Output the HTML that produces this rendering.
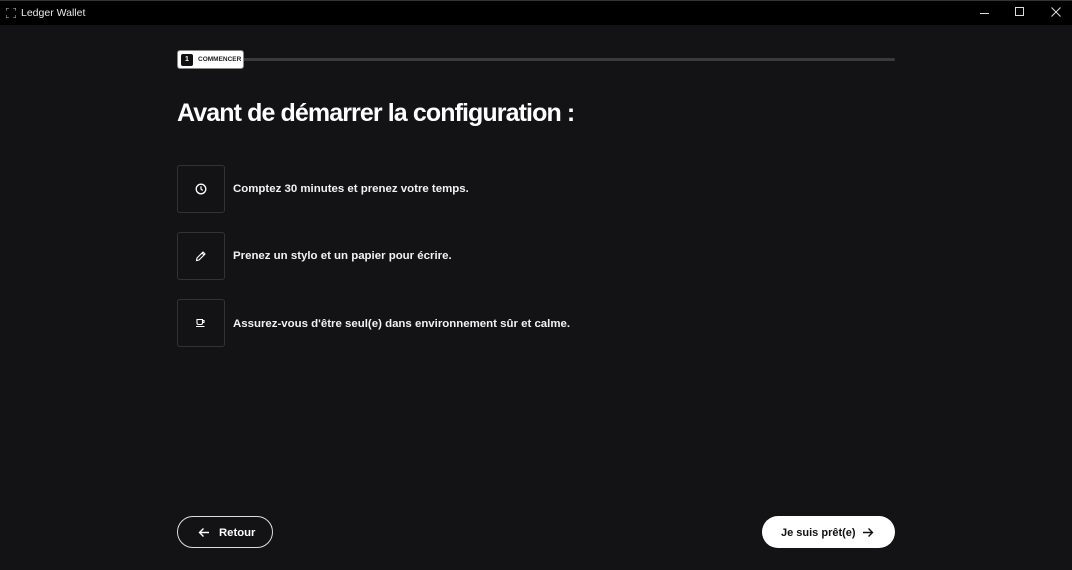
<!DOCTYPE html>
<html><head><meta charset="utf-8"><style>
*{margin:0;padding:0;box-sizing:border-box}
body{width:1072px;height:570px;background:#131315;font-family:"Liberation Sans",sans-serif;color:#fff;position:relative;overflow:hidden}
.tb{position:absolute;left:0;top:0;width:1072px;height:25px;background:#000;border-top:1px solid #333}
.tb .t{position:absolute;left:21px;top:6px;font-size:10.5px;color:#e8e8e8}
.ab{position:absolute}
.box{position:absolute;left:177px;width:48px;height:48px;border:1px solid #333;border-radius:3px}
.txt{position:absolute;left:233px;font-size:11.45px;font-weight:bold;color:#f2f2f2}
</style></head><body>
<div class="tb">
<svg class="ab" style="left:6px;top:7px" width="10" height="10"><path d="M0 3V0h3M7 0h3v3M10 7v3H7M3 10H0V7" stroke="#bbb" fill="none" stroke-width="1"/></svg>
<div class="t">Ledger Wallet</div>
<svg class="ab" style="left:980px;top:7px" width="10" height="10"><path d="M0 5.5h9" stroke="#ddd"/></svg>
<svg class="ab" style="left:1015px;top:6px" width="11" height="11"><rect x="0.5" y="0.5" width="8" height="8" stroke="#ddd" fill="none"/></svg>
<svg class="ab" style="left:1051px;top:6px" width="11" height="11"><path d="M0.5 0.5l9 9M9.5 0.5l-9 9" stroke="#ddd"/></svg>
</div>
<div class="ab" style="left:243px;top:58px;width:652px;height:3px;background:#3a3a3c;border-radius:2px"></div>
<div class="ab" style="left:177px;top:50px;width:67px;height:19px;background:#fff;border-radius:3px;border:1px solid #888"></div>
<div class="ab" style="left:181px;top:54px;width:12px;height:12px;background:#111;border-radius:2px;color:#fff;font-size:7px;font-weight:bold;text-align:center;line-height:12px">1</div>
<div class="ab" style="left:198px;top:56px;font-size:6.5px;color:#222;font-weight:bold">COMMENCER</div>
<div class="ab" style="left:177px;top:99px;font-size:25px;font-weight:bold;letter-spacing:-0.9px;color:#fff">Avant de démarrer la configuration :</div>
<div class="box" style="top:165px"></div>
<svg class="ab" style="left:195px;top:183px" width="12" height="12" viewBox="0 0 12 12"><circle cx="6" cy="6" r="4.8" stroke="#fff" stroke-width="1.3" fill="none"/><path d="M6 3.3V6l1.7 1.5" stroke="#fff" stroke-width="1.2" fill="none"/></svg>
<div class="txt" style="top:183px">Comptez 30 minutes et prenez votre temps.</div>
<div class="box" style="top:232px"></div>
<svg class="ab" style="left:195px;top:250px" width="12" height="12" viewBox="0 0 12 12"><path d="M1.5 10.5l.5-2.5 6-6 2 2-6 6zM7 3l2 2" stroke="#fff" stroke-width="1.1" fill="none"/></svg>
<div class="txt" style="top:250px">Prenez un stylo et un papier pour écrire.</div>
<div class="box" style="top:299px"></div>
<svg class="ab" style="left:195px;top:318px" width="12" height="12" viewBox="0 0 12 12"><path d="M2 1.5h5.5v3.5q0 1.5-1.5 1.5h-2.5q-1.5 0-1.5-1.5zM7.5 2.5h1.5v2h-1.5M1 8.5h8.5" stroke="#fff" stroke-width="1.1" fill="none"/></svg>
<div class="txt" style="top:318px">Assurez-vous d'être seul(e) dans environnement sûr et calme.</div>
<div class="ab" style="left:177px;top:516px;width:96px;height:32px;border:1px solid #ddd;border-radius:16px"></div>
<svg class="ab" style="left:198px;top:527px" width="12" height="11" viewBox="0 0 12 11"><path d="M11 5.5H1.5M5.5 1.5l-4 4 4 4" stroke="#fff" stroke-width="1.4" fill="none"/></svg>
<div class="ab" style="left:219px;top:527px;font-size:11.3px;font-weight:bold">Retour</div>
<div class="ab" style="left:762px;top:516px;width:133px;height:32px;background:#fff;border-radius:16px"></div>
<div class="ab" style="left:781px;top:527px;font-size:11px;font-weight:bold;color:#111">Je suis prêt(e)</div>
<svg class="ab" style="left:862px;top:527px" width="12" height="11" viewBox="0 0 12 11"><path d="M1 5.5h9.5M6.5 1.5l4 4-4 4" stroke="#111" stroke-width="1.4" fill="none"/></svg>
</body></html>
